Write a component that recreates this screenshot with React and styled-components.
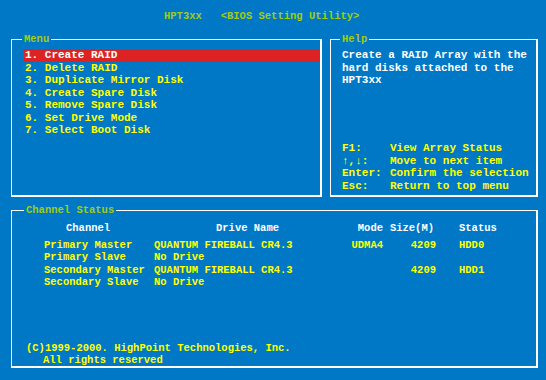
import React from "react";
import styled, { createGlobalStyle } from "styled-components";

const Global = createGlobalStyle`
  html, body { margin: 0; padding: 0; background: #0078c6; }
  body {
    width: 546px; height: 380px; overflow: hidden;
    font-family: "Liberation Mono", "Courier New", monospace;
    font-weight: bold;
  }
`;

const Screen = styled.div`
  width: 546px;
  height: 380px;
  box-sizing: border-box;
  padding: 10px 8px 0 11px;
  display: flex;
  flex-direction: column;
`;

const Title = styled.div`
  height: 13px;
  margin-bottom: 10px;
  padding-left: 153px;
  font-size: 10.5px;
  line-height: 13px;
  color: #a2cc10;
  white-space: pre;
`;

const TopRow = styled.div`
  display: flex;
  gap: 8px;
  flex-shrink: 0;
`;

const Panel = styled.fieldset`
  margin: ${(p) => p.$mt || 0}px 0 0 0;
  min-width: 0;
  flex-shrink: 0;
  box-sizing: border-box;
  width: ${(p) => p.$w}px;
  height: 164px;
  padding: ${(p) => p.$pad};
  border-style: solid;
  border-color: #ffffff;
  border-width: 1px 2px 2px 1px;
`;

const Legend = styled.legend`
  margin: 0 0 0 -2px;
  padding: 0 2px;
  font-size: 10.5px;
  line-height: 12px;
  color: #a2cc10;
`;

const Body = styled.div`
  height: ${(p) => p.$h}px;
  display: flex;
  flex-direction: column;
  justify-content: ${(p) => p.$justify || "flex-start"};
`;

const MenuItem = styled.div`
  height: 12.5px;
  line-height: 12.5px;
  padding-left: 1px;
  font-size: 11px;
  white-space: pre;
  color: ${(p) => (p.$active ? "#ffffff" : "#ffff00")};
  background: ${(p) => (p.$active ? "#dc2222" : "transparent")};
`;

const HelpText = styled.div`
  font-size: 11px;
  line-height: 12.5px;
  color: #ffffff;
  padding-right: 4px;
`;

const KeyList = styled.div`
  display: grid;
  grid-template-columns: 48px auto;
  grid-auto-rows: 12.5px;
  font-size: 11px;
  line-height: 12.5px;
  color: #ffff00;
  white-space: pre;
`;

const Table = styled.div`
  margin-left: 18px;
  display: grid;
  grid-template-columns: 110px 186px 43px 53px auto;
  grid-template-rows: 17px repeat(4, 12.5px);
  font-size: 10.5px;
  line-height: 12.5px;
  white-space: pre;
`;

const Cell = styled.div`
  color: ${(p) => (p.$head ? "#ffffff" : "#ffff00")};
  text-align: ${(p) => p.$align || "left"};
  padding-left: ${(p) => p.$pl || 0}px;
  padding-right: ${(p) => p.$pr || 0}px;
`;

const Footer = styled.div`
  font-size: 10.5px;
  line-height: 12.5px;
  color: #ffff00;
  white-space: pre;
`;

const FooterLine = styled.div`
  padding-left: ${(p) => p.$indent || 0}px;
`;

const menu = [
  "1. Create RAID",
  "2. Delete RAID",
  "3. Duplicate Mirror Disk",
  "4. Create Spare Disk",
  "5. Remove Spare Disk",
  "6. Set Drive Mode",
  "7. Select Boot Disk",
];

const keys = [
  ["F1:", "View Array Status"],
  ["\u2191,\u2193:", "Move to next item"],
  ["Enter:", "Confirm the selection"],
  ["Esc:", "Return to top menu"],
];

const rows = [
  ["Primary Master", "QUANTUM FIREBALL CR4.3", "UDMA4", "4209", "HDD0"],
  ["Primary Slave", "No Drive", "", "", ""],
  ["Secondary Master", "QUANTUM FIREBALL CR4.3", "", "4209", "HDD1"],
  ["Secondary Slave", "No Drive", "", "", ""],
];

export default function App() {
  return (
    <Screen>
      <Global />
      <Title>{"HPT3xx   <BIOS Setting Utility>"}</Title>
      <TopRow>
        <Panel $w={311} $pad="4px 0 0 12px">
          <Legend>Menu</Legend>
          {menu.map((m, i) => (
            <MenuItem key={m} $active={i === 0}>
              {m}
            </MenuItem>
          ))}
        </Panel>
        <Panel $w={208} $pad="4px 0 0 11px">
          <Legend>Help</Legend>
          <Body $h={143} $justify="space-between">
            <HelpText>Create a RAID Array with the hard disks attached to the HPT3xx</HelpText>
            <KeyList>
              {keys.map(([k, d]) => (
                <React.Fragment key={k}>
                  <span>{k}</span>
                  <span>{d}</span>
                </React.Fragment>
              ))}
            </KeyList>
          </Body>
        </Panel>
      </TopRow>
      <Panel $w={527} $mt={7} $pad="5.5px 0 0 14px">
        <Legend>Channel Status</Legend>
        <Body $h={145} $justify="space-between">
          <Table>
            <Cell $head $pl={22}>Channel</Cell>
            <Cell $head $pl={62}>Drive Name</Cell>
            <Cell $head $align="right">Mode</Cell>
            <Cell $head $align="right" $pr={2}>Size(M)</Cell>
            <Cell $head $pl={23}>Status</Cell>
            {rows.map((r) => (
              <React.Fragment key={r[0]}>
                <Cell>{r[0]}</Cell>
                <Cell>{r[1]}</Cell>
                <Cell $align="right">{r[2]}</Cell>
                <Cell $align="right">{r[3]}</Cell>
                <Cell $pl={23}>{r[4]}</Cell>
              </React.Fragment>
            ))}
          </Table>
          <Footer>
            <FooterLine>(C)1999-2000. HighPoint Technologies, Inc.</FooterLine>
            <FooterLine $indent={17}>All rights reserved</FooterLine>
          </Footer>
        </Body>
      </Panel>
    </Screen>
  );
}
